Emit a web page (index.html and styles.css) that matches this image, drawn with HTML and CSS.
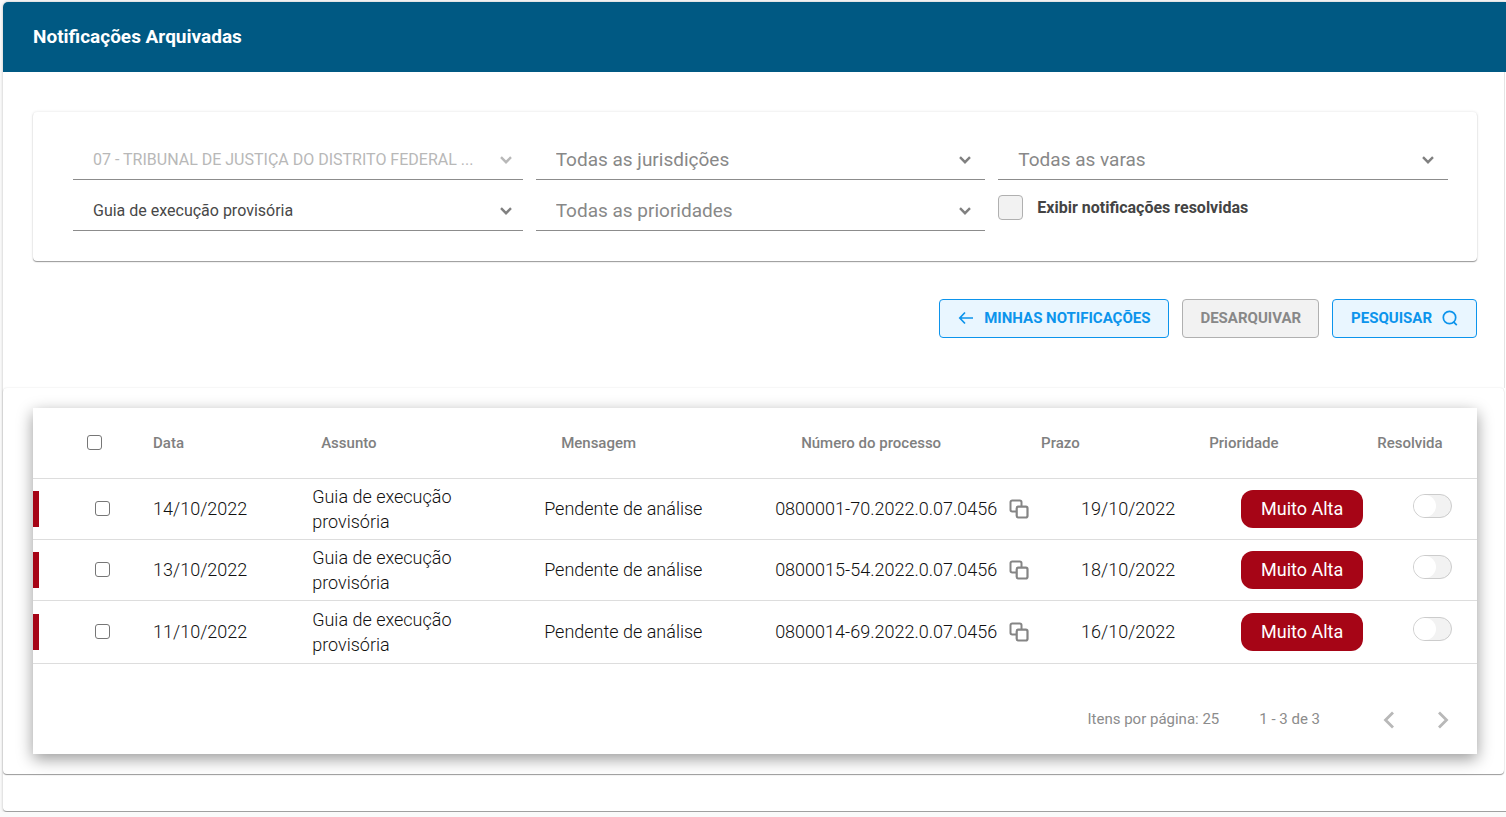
FILE: index.html
```html
<!DOCTYPE html>
<html lang="pt-BR">
<head>
<meta charset="utf-8">
<meta name="viewport" content="width=device-width, initial-scale=1">
<title>Notificações Arquivadas</title>
<link rel="stylesheet" href="styles.css">
</head>
<body>
<svg class="sprite" aria-hidden="true">
  <symbol id="chevron" viewBox="0 0 14 10"><path d="M2 2.200l5 5 5-5" fill="none" stroke="currentColor" stroke-width="2.400"/></symbol>
  <symbol id="copy" viewBox="0 0 20 20"><path d="M7 12.500H3.200A1.700 1.700 0 0 1 1.500 10.800V3.200A1.700 1.700 0 0 1 3.200 1.500H10.800A1.700 1.700 0 0 1 12.500 3.200V7" fill="none" stroke="currentColor" stroke-width="2"/><rect x="7.700" y="7.700" width="10.800" height="10.800" rx="1.700" fill="none" stroke="currentColor" stroke-width="2.200"/></symbol>
</svg>
<main class="page">
  <header class="page-header"><h1>Notificações Arquivadas</h1></header>
  <div class="page-body">
    <form class="filters">
      <div class="field field-small field-disabled">
        <select aria-label="Tribunal" disabled><option>07 - TRIBUNAL DE JUSTIÇA DO DISTRITO FEDERAL ...</option></select>
        <svg class="chevron"><use href="#chevron"/></svg>
      </div>
      <div class="field">
        <select aria-label="Jurisdição"><option>Todas as jurisdições</option></select>
        <svg class="chevron"><use href="#chevron"/></svg>
      </div>
      <div class="field">
        <select aria-label="Vara"><option>Todas as varas</option></select>
        <svg class="chevron"><use href="#chevron"/></svg>
      </div>
      <div class="field field-small">
        <select aria-label="Assunto"><option>Guia de execução provisória</option></select>
        <svg class="chevron"><use href="#chevron"/></svg>
      </div>
      <div class="field">
        <select aria-label="Prioridade"><option>Todas as prioridades</option></select>
        <svg class="chevron"><use href="#chevron"/></svg>
      </div>
      <label class="show-resolved"><input type="checkbox" class="box-check">Exibir notificações resolvidas</label>
    </form>

    <div class="actions">
      <button type="button" class="btn">
        <svg width="16" height="16" viewBox="0 0 16 16" fill="none" stroke="currentColor" stroke-width="1.700"><path d="M15 8H2M7 2.500L1.800 8 7 13.500"/></svg>
        MINHAS NOTIFICAÇÕES
      </button>
      <button type="button" class="btn btn-disabled" disabled>DESARQUIVAR</button>
      <button type="button" class="btn">
        PESQUISAR
        <svg width="16" height="16" viewBox="0 0 16 16" fill="none" stroke="currentColor" stroke-width="1.700"><circle cx="7.500" cy="7.500" r="6.200"/><path d="M11.500 11.800l3.300 3.300"/></svg>
      </button>
    </div>
  </div>

  <section class="results">
    <div class="table-card">
      <table class="grid">
        <colgroup><col class="w-select"><col class="w-short"><col class="w-long"><col class="w-long"><col class="w-long"><col class="w-short"><col class="w-short"><col></colgroup>
        <thead>
          <tr>
            <th class="check-all"><input type="checkbox" aria-label="Selecionar todas"></th>
            <th>Data</th><th>Assunto</th><th>Mensagem</th><th>Número do processo</th><th>Prazo</th><th>Prioridade</th><th>Resolvida</th>
          </tr>
        </thead>
        <tbody>
          <tr>
            <td><div class="mark-row"><span class="bar"></span><input type="checkbox" aria-label="Selecionar 0800001-70"></div></td>
            <td class="date">14/10/2022</td>
            <td class="subject">Guia de execução provisória</td>
            <td class="message">Pendente de análise</td>
            <td class="number"><div class="number-row">0800001-70.2022.0.07.0456<button type="button" class="copy" aria-label="Copiar"><svg width="20" height="20"><use href="#copy"/></svg></button></div></td>
            <td class="due">19/10/2022</td>
            <td class="priority"><span class="badge">Muito Alta</span></td>
            <td class="resolved"><input type="checkbox" class="switch" aria-label="Resolvida"></td>
          </tr>
          <tr>
            <td><div class="mark-row"><span class="bar"></span><input type="checkbox" aria-label="Selecionar 0800015-54"></div></td>
            <td class="date">13/10/2022</td>
            <td class="subject">Guia de execução provisória</td>
            <td class="message">Pendente de análise</td>
            <td class="number"><div class="number-row">0800015-54.2022.0.07.0456<button type="button" class="copy" aria-label="Copiar"><svg width="20" height="20"><use href="#copy"/></svg></button></div></td>
            <td class="due">18/10/2022</td>
            <td class="priority"><span class="badge">Muito Alta</span></td>
            <td class="resolved"><input type="checkbox" class="switch" aria-label="Resolvida"></td>
          </tr>
          <tr>
            <td><div class="mark-row"><span class="bar"></span><input type="checkbox" aria-label="Selecionar 0800014-69"></div></td>
            <td class="date">11/10/2022</td>
            <td class="subject">Guia de execução provisória</td>
            <td class="message">Pendente de análise</td>
            <td class="number"><div class="number-row">0800014-69.2022.0.07.0456<button type="button" class="copy" aria-label="Copiar"><svg width="20" height="20"><use href="#copy"/></svg></button></div></td>
            <td class="due">16/10/2022</td>
            <td class="priority"><span class="badge">Muito Alta</span></td>
            <td class="resolved"><input type="checkbox" class="switch" aria-label="Resolvida"></td>
          </tr>
        </tbody>
      </table>
      <nav class="pager" aria-label="Paginação">
        <span>Itens por página: 25</span>
        <span class="range">1 - 3 de 3</span>
        <button type="button" aria-label="Página anterior"><svg width="12" height="18" viewBox="0 0 12 18" fill="none" stroke="currentColor" stroke-width="2.800"><path d="M10 2.500L2.500 10l7.500 7.500"/></svg></button>
        <button type="button" aria-label="Próxima página"><svg width="12" height="18" viewBox="0 0 12 18" fill="none" stroke="currentColor" stroke-width="2.800"><path d="M2 2.500L9.500 10 2 17.500"/></svg></button>
      </nav>
    </div>
  </section>
</main>
</body>
</html>
```
FILE: styles.css
```css
* { box-sizing: border-box; }

body {
  margin: 0;
  padding: 2px 0 0 3px;
  background: #fafafa;
  color: #111;
  font-family: Roboto, "Liberation Sans", sans-serif;
}

button, select, input { margin: 0; font-family: inherit; }

.sprite { display: none; }

.page {
  padding-bottom: 37px;
  background: #fff;
  border-bottom: 1px solid #a0a0a0;
  border-radius: 5px 0 0 4px;
  box-shadow: 0 0 3px rgba(0, 0, 0, .25);
}

.page-header {
  display: flex;
  align-items: center;
  height: 70px;
  padding: 0 30px;
  background: #005983;
  border-radius: 5px 0 0 0;
}

.page-header h1 {
  margin: 0;
  color: #fff;
  font-size: 19px;
  font-weight: 700;
  line-height: 24px;
}

.page-body {
  margin-right: 1px;
  padding: 40px 27px 50px 30px;
  border-right: 1px solid #e4e4e4;
}

.filters {
  display: grid;
  grid-template-columns: repeat(3, 1fr);
  column-gap: 13px;
  padding: 17px 29px 30px 40px;
  border-radius: 4px;
  box-shadow: 0 1px 1px #999, 0 0 3px rgba(0, 0, 0, .12);
}

.field {
  display: flex;
  align-items: center;
  height: 51px;
  padding: 11px 13px 0 0;
  border-bottom: 1px solid #8c8c8c;
  color: #808080;
}

.field select {
  flex: 1;
  min-width: 0;
  height: 38px;
  padding: 0 0 0 20px;
  border: 0;
  background: none;
  color: #888;
  font-size: 19px;
  opacity: 1;
  appearance: none;
}

.field-small { padding-right: 10px; }
.field-small select { color: #484848; font-size: 16px; }
.field-disabled select, .field-disabled .chevron { color: #b8b8b8; }

.chevron { width: 14px; height: 10px; }

.show-resolved {
  display: flex;
  align-items: center;
  gap: 14px;
  height: 51px;
  padding-top: 4px;
  color: #444;
  font-size: 16px;
  font-weight: 700;
}

.box-check {
  width: 25px;
  height: 25px;
  border: 1px solid #b0b0b0;
  border-radius: 4px;
  background: #f2f2f2;
  appearance: none;
}

.actions {
  display: flex;
  justify-content: flex-end;
  gap: 13px;
  margin-top: 38px;
}

.btn {
  display: flex;
  align-items: center;
  gap: 10px;
  height: 39px;
  padding: 0 18px 1px;
  border: 1px solid #0c94ec;
  border-radius: 4px;
  background: #e9f6ff;
  color: #0c94ec;
  font-size: 15px;
  font-weight: 700;
}

.btn-disabled { padding: 0 17px 1px; border-color: #b0b0b0; background: #f2f2f2; color: #888; }

.results {
  margin-right: 2px;
  padding: 20px 27px 20px 30px;
  border-radius: 4px;
  box-shadow: 0 1px 1px #999, 0 0 2px rgba(0, 0, 0, .12);
}

.table-card {
  background: #fff;
  box-shadow: 0 5px 15px rgba(0, 0, 0, .4);
}

.grid {
  width: 100%;
  border-collapse: collapse;
  table-layout: fixed;
}

.w-select { width: 6.1%; }
.w-short { width: 11.64%; }
.w-long { width: 16.62%; }

.grid th {
  height: 70px;
  padding: 0 0 0 32px;
  color: #808080;
  font-size: 15px;
  font-weight: 500;
  text-align: left;
}

.grid tr { border-bottom: 1px solid #ddd; }

.grid td {
  height: 61px;
  padding: 0;
  font-size: 18px;
  font-weight: 300;
  line-height: 25px;
  white-space: nowrap;
}

.grid tr:last-child td { height: 63px; }

.grid .check-all { padding-left: 54px; }

.grid input[type="checkbox"]:not(.switch) {
  display: block;
  width: 15px;
  height: 15px;
  border: 1px solid #767676;
  border-radius: 3px;
  background: #fff;
  appearance: none;
}

.mark-row { display: flex; align-items: center; gap: 56px; }
.bar { width: 6px; height: 36px; background: #a60516; }

.grid .date { padding-left: 32px; }
.grid .subject { padding: 0 40px 0 23px; white-space: normal; }
.grid .message { padding-left: 15px; }
.grid .number { padding-left: 6px; }
.grid .due { padding-left: 72px; }
.grid .priority { padding-left: 64px; }
.grid .resolved { padding: 0 0 6px 68px; }

.number-row { display: flex; align-items: center; gap: 12px; }

.copy {
  padding: 0;
  border: 0;
  background: none;
  color: #858585;
}
.copy svg { display: block; }

.badge {
  display: block;
  width: 122px;
  border-radius: 12px;
  background: #a60516;
  color: #fff;
  font-weight: 400;
  line-height: 38px;
  text-align: center;
}

.switch {
  display: block;
  width: 39px;
  height: 24px;
  border: 1px solid #ccc;
  border-radius: 12px;
  background: #f2f2f2;
  appearance: none;
}
.switch::before {
  content: "";
  display: block;
  width: 22px;
  height: 22px;
  border-radius: 11px;
  background: #fff;
}

.pager {
  display: flex;
  align-items: center;
  justify-content: flex-end;
  height: 90px;
  padding: 20px 28px 0 0;
  color: #8c8c8c;
  font-size: 15px;
}
.range { margin: 0 63px 0 40px; }
.pager button {
  padding: 0;
  border: 0;
  background: none;
  color: #b8b8b8;
}
.pager button + button { margin-left: 42px; }
.pager svg { display: block; overflow: visible; }
```
